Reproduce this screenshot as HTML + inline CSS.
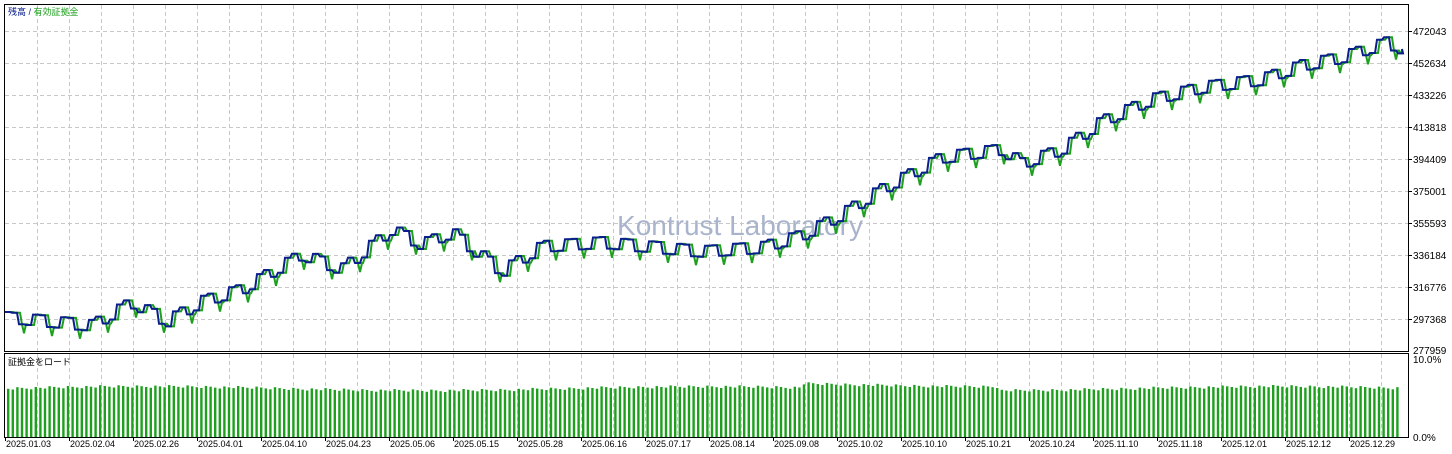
<!DOCTYPE html>
<html><head><meta charset="utf-8"><style>
body{margin:0;background:#fff;width:1452px;height:454px;overflow:hidden;font-family:"Liberation Sans","Noto Sans CJK JP",sans-serif}
svg{position:absolute;left:0;top:0}
</style></head><body>
<svg id="s" width="1452" height="454" xmlns="http://www.w3.org/2000/svg" font-family="Liberation Sans, Noto Sans CJK JP, sans-serif" font-size="10">
<g id="grid" stroke="#c8c8c8" stroke-dasharray="4,3" stroke-width="1"></g>
<text x="740" y="235" font-size="28" fill="#a9b4cc" text-anchor="middle">Kontrust Laboratory</text>
<g id="bars" fill="#1ea01e"></g>
<polyline id="g" fill="none" stroke="#1ea01e" stroke-width="2"/>
<polyline id="b" fill="none" stroke="#0a1e8c" stroke-width="2"/>
<rect x="4.5" y="4.5" width="1404" height="347" fill="none" stroke="#000"/>
<rect x="4.5" y="353.5" width="1404" height="84" fill="none" stroke="#000"/>
<text x="8" y="15" fill="#0a1e8c" font-size="9">残高 / <tspan fill="#1ea01e">有効証拠金</tspan></text>
<text x="8" y="365" fill="#000" font-size="9">証拠金をロード</text>
<g id="ax" font-size="10" fill="#000"></g>
</svg>
<script>
var ns="http://www.w3.org/2000/svg",s=document.getElementById('s');
function el(p,t,a,txt){var e=document.createElementNS(ns,t);for(var k in a)e.setAttribute(k,a[k]);if(txt)e.textContent=txt;document.getElementById(p).appendChild(e);return e;}
for(var x=37;x<1408;x+=32)el('grid','line',{x1:x+.5,y1:5,x2:x+.5,y2:351});
for(var x=37;x<1408;x+=32)el('grid','line',{x1:x+.5,y1:354,x2:x+.5,y2:437});
var labs=["472043","452634","433226","413818","394409","375001","355593","336184","316776","297368"];
for(var i=0;i<10;i++){var y=31+i*32;el('grid','line',{x1:5,y1:y+.5,x2:1408,y2:y+.5});
el('ax','line',{x1:1408,y1:y+.5,x2:1412,y2:y+.5,stroke:'#000'});el('ax','text',{x:1413,y:y+4},labs[i]);}
el('ax','text',{x:1413,y:354},"277959");el('ax','text',{x:1413,y:363},"10.0%");el('ax','text',{x:1413,y:441},"0.0%");
var d=["2025.01.03","2025.02.04","2025.02.26","2025.04.01","2025.04.10","2025.04.23","2025.05.06","2025.05.15","2025.05.28","2025.06.16","2025.07.17","2025.08.14","2025.09.08","2025.10.02","2025.10.10","2025.10.21","2025.10.24","2025.11.10","2025.11.18","2025.12.01","2025.12.12","2025.12.29"];
for(var i=0;i<d.length;i++){var x=5+i*64;el('ax','text',{x:x+1,y:447,'font-size':9},d[i]);el('ax','line',{x1:x+.5,y1:437,x2:x+.5,y2:441,stroke:'#000'});}
var K=[[5,318],[90,326],[130,303],[165,322],[200,302],[240,290],[300,255],[340,270],[390,230],[420,245],[450,233],[500,272],[540,247],[600,243],[700,252],[760,248],[800,236],[840,215],[880,190],[940,158],[1000,150],[1020,164],[1060,150],[1100,122],[1150,100],[1200,88],[1260,80],[1300,66],[1340,58],[1385,43],[1402,50]];
function base(x){for(var i=0;i<K.length-1;i++){if(x<=K[i+1][0]){var t=(x-K[i][0])/(K[i+1][0]-K[i][0]);return K[i][1]+t*(K[i+1][1]-K[i][1]);}}return K[K.length-1][1];}
var pat=[-6,-6,5,5],seg=7,bp=[],gp=[];
for(var i=0,x=5;x<1402;i++,x+=seg){var y=base(x)+pat[i%4];
bp.push((x)+','+y.toFixed(1));bp.push((x+seg-2)+','+y.toFixed(1));
var gx=x+3,gy=y; gp.push(gx+','+gy.toFixed(1));
if(i%4==2){gp.push((gx+2)+','+(gy+9).toFixed(1));gp.push((gx+4)+','+gy.toFixed(1));}
gp.push(Math.min(gx+seg-2,1402)+','+gy.toFixed(1));}
bp.push('1402,'+(base(1402)-1));gp.push('1402,'+(base(1402)-1));
document.getElementById('b').setAttribute('points',bp.join(' '));
document.getElementById('g').setAttribute('points',gp.join(' '));
for(var x=7;x<1398;x+=4.6){var h=47+Math.sin(x/90)*2+(x>800&&x<1000?4:0)+((x*7)%3);el('bars','rect',{x:x.toFixed(1),y:(437-h).toFixed(1),width:2.4,height:h.toFixed(1)});}
</script>
</body></html>
